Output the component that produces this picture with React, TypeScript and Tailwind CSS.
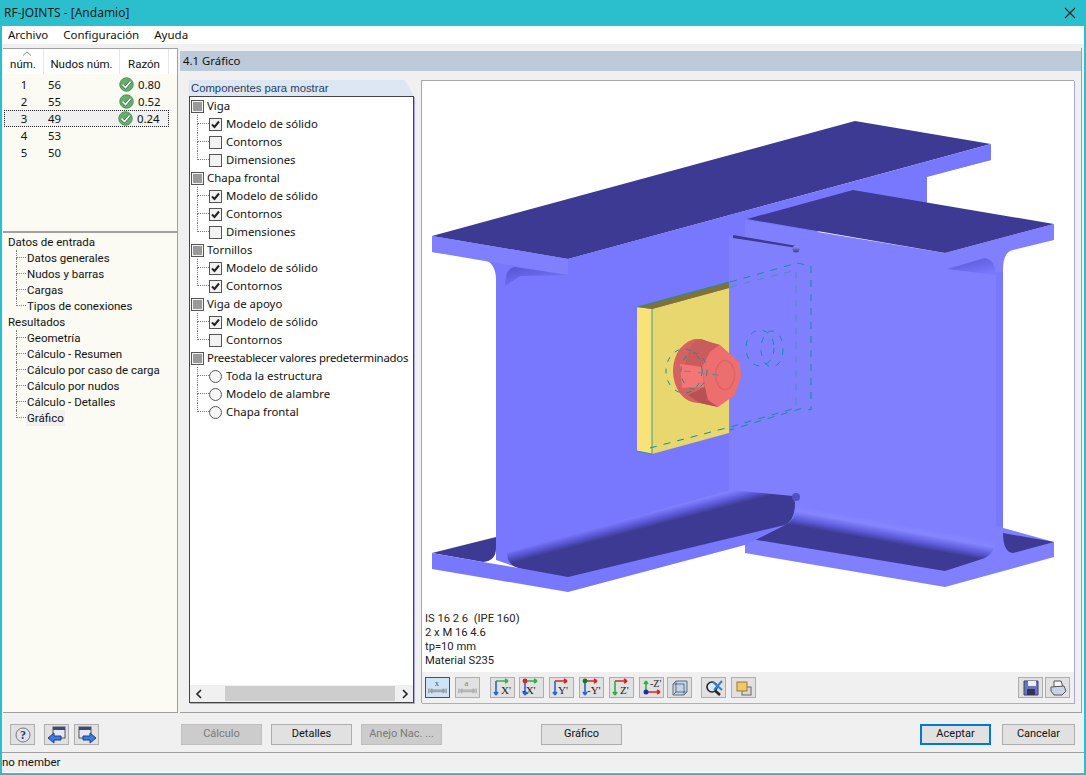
import React from "react";

const font = { fontFamily: '"Noto Sans","Liberation Sans",sans-serif' };
const roboto = { fontFamily: "Roboto, sans-serif" };

function Check() {
  return (
    <svg width="15" height="15" viewBox="0 0 16 16" className="shrink-0">
      <circle cx="8" cy="8" r="7.2" fill="#62b06e" stroke="#4d8f5a" />
      <path d="M3.8 8.2 L7 11.2 L12.4 4.8" fill="none" stroke="#3c5f45" strokeWidth="3" />
      <path d="M3.8 8.2 L7 11.2 L12.4 4.8" fill="none" stroke="#fff" strokeWidth="1.8" />
    </svg>
  );
}

function Branch({ last, h = 18, w = 12 }: { last?: boolean; h?: number; w?: number }) {
  return (
    <div className="flex flex-col shrink-0" style={{ width: w, height: h }}>
      <div className="border-l border-b border-dotted border-[#777]" style={{ height: h / 2 }} />
      {!last && <div className="border-l border-dotted border-[#777]" style={{ height: h / 2 }} />}
    </div>
  );
}

function Box({ on }: { on?: boolean }) {
  return (
    <div className="w-[13px] h-[13px] shrink-0 border border-[#555] bg-[#f2f2f2] flex items-center justify-center">
      {on && (
        <svg width="11" height="11" viewBox="0 0 11 11">
          <path d="M2 5.5 L4.5 8 L9 2.5" fill="none" stroke="#222" strokeWidth="2" />
        </svg>
      )}
    </div>
  );
}

function Group({ label, tight }: { label: string; tight?: boolean }) {
  return (
    <div className="h-[18px] flex items-center pl-[1px] whitespace-nowrap">
      <div className="w-[13px] h-[13px] shrink-0 border border-[#555] bg-[#f2f2f2] flex items-center justify-center">
        <div className="w-[9px] h-[9px] bg-[#9a9a9a]" />
      </div>
      <span className={tight ? "ml-[3px] tracking-[-0.25px]" : "ml-[3px]"}>{label}</span>
    </div>
  );
}

function Item({ label, on, last, radio }: { label: string; on?: boolean; last?: boolean; radio?: boolean }) {
  return (
    <div className="h-[18px] flex items-center pl-[7px] whitespace-nowrap">
      <Branch last={last} />
      {radio ? (
        <div className="w-[13px] h-[13px] shrink-0 rounded-full border border-[#555] bg-[#f6f6f6]" />
      ) : (
        <Box on={on} />
      )}
      <span className="ml-[4px]">{label}</span>
    </div>
  );
}

function NavItem({ label, last, sel }: { label: string; last?: boolean; sel?: boolean }) {
  return (
    <div className="h-[16px] flex items-center pl-[13px] whitespace-nowrap">
      <Branch last={last} h={16} w={10} />
      <span className={sel ? "bg-[#f0f0f0] px-[1px] leading-[16px]" : "px-[1px] leading-[16px]"}>{label}</span>
    </div>
  );
}

function Btn({ label, disabled, className }: { label: string; disabled?: boolean; className: string }) {
  return (
    <div
      style={roboto}
      className={
        "h-[21px] shrink-0 flex items-center justify-center border text-[11px] " +
        (disabled ? "bg-[#cccccc] border-[#bfbfbf] text-[#7a7a7a] " : "bg-[#e1e1e1] border-[#adadad] text-[#111] ") +
        className
      }
    >
      {label}
    </div>
  );
}

function TBtn({ children, className = "", active }: { children?: React.ReactNode; className?: string; active?: boolean }) {
  return (
    <div
      className={
        "w-[25px] h-[21px] shrink-0 border flex items-center justify-center " +
        (active ? "bg-[#cce4f7] border-[#1a5a96] " : "bg-[#e1e1e1] border-[#adadad] ") +
        className
      }
    >
      {children}
    </div>
  );
}

function Axis({ label, v, h, dot, lx = 10 }: { label: string; v: string; h: string; dot?: string; lx?: number }) {
  return (
    <svg width="23" height="19" viewBox="0 0 23 19">
      <path d="M5 3 H17 M17 3 l-3 -2 M17 3 l-3 2" stroke={h} strokeWidth="1.6" fill="none" />
      <path d="M5 3 V17 M5 17 l-2 -3 M5 17 l2 -3" stroke={v} strokeWidth="1.6" fill="none" />
      {dot && <circle cx="5" cy="3" r="2.4" fill={dot} />}
      <text x={lx} y="16" fontSize="11" fontFamily="Liberation Serif, serif" fill="#222">
        {label}
      </text>
    </svg>
  );
}

function Beam({ opacity = 1, label }: { opacity?: number; label: string }) {
  return (
    <svg width="24" height="19" viewBox="0 0 24 19" opacity={opacity}>
      <text x="9" y="8" fontSize="9" fontFamily="Liberation Serif, serif" fill="#555">{label}</text>
      <path d="M4 13 H20" stroke="#a3a3a3" strokeWidth="3" />
      <path d="M3 10.5 v5 M6 10.5 v5 M18 10.5 v5 M21 10.5 v5" stroke="#9a9a9a" strokeWidth="1.5" />
    </svg>
  );
}

function Model() {
  const light = "#8080ff";
  const web = "#7878ff";
  const dark = "#3c3a92";
  const teal = "#0f8f98";
  return (
    <svg viewBox="422 81 652 529" className="w-[652px] h-[529px] block">
      <defs>
        <linearGradient id="f1" gradientUnits="userSpaceOnUse" x1="640" y1="505" x2="646" y2="528">
          <stop offset="0" stopColor={web} />
          <stop offset="0.42" stopColor="#8080ff" />
          <stop offset="0.7" stopColor="#5e5cdc" />
          <stop offset="1" stopColor={dark} />
        </linearGradient>
        <linearGradient id="f2" gradientUnits="userSpaceOnUse" x1="900" y1="522" x2="896" y2="544">
          <stop offset="0" stopColor={light} />
          <stop offset="0.35" stopColor="#8585ff" />
          <stop offset="0.7" stopColor="#5e5cdc" />
          <stop offset="1" stopColor={dark} />
        </linearGradient>
        <linearGradient id="f3" x1="0" y1="0" x2="0.7" y2="1">
          <stop offset="0" stopColor="#5654d0" />
          <stop offset="1" stopColor={web} />
        </linearGradient>
        <linearGradient id="b1" x1="0" y1="0" x2="0" y2="1">
          <stop offset="0" stopColor="#9a98ff" />
          <stop offset="1" stopColor="#3c3a92" />
        </linearGradient>
      </defs>
      {/* main beam */}
      <path d="M432 236 L432 252 L482 259 Q496 262 496 280 L496 560 L568 585 L745 540 L729 490 L729 300 L745 236 L927 203 L927 177 L991 160 L991 145 L568 259 Z" fill={web} />
      <path d="M432 236 L855 121 L991 144 L568 259 Z" fill={dark} />
      <path d="M432 236 L568 259 L568 275 L432 252 Z" fill={light} />
      <path d="M568 259 L991 144 L991 160 L927 176 L927 203 L729 255 L568 275 Z" fill={web} />
      <path d="M505 286 Q505 268 515 267 L568 275 L520 276 Z" fill="url(#f3)" />
      {/* right beam */}
      <path d="M729 236 L745 236 L745 220 L945 253 L1054 224 L1054 240 L1013 250 Q1003 252 1003 270 L1003 540 L995 558 L945 571 L745 538 L729 490 Z" fill={light} />
      <path d="M747 219 L853 190 L1054 224 L945 253 Z" fill={dark} />
      <path d="M947 269 L985 258 Q995 260 996 275 Z" fill="url(#f3)" />
      <path d="M996 272 H1003 V540 H996 Z" fill={web} />
      <path d="M733 235 L797 246 L797 248 L733 238 Z" fill={dark} />
      <circle cx="796" cy="249" r="3.5" fill="url(#b1)" />
      {/* right bottom flange */}
      <path d="M745 538 L745 553 L945 587 L1054 557 L1054 542 L945 512 Z" fill={light} />
      <path d="M1003 533 L1054 542 L1013 553 Q1003 552 1003 533 Z" fill={dark} />
      <path d="M797 507 L995 542 Q995 552 985 558 L945 571 L745 538 L785 525 Q795 520 797 507 Z" fill="url(#f2)" />
      {/* main bottom flange */}
      <path d="M432 553 L496 537 L496 548 Q496 561 483 562 Z" fill={dark} />
      <path d="M432 553 L483 562 L519 568 L568 577 L785 525 L745 545 L568 592 L432 569 Z" fill={web} />
      <path d="M785 525 L745 545 L745 538 Z" fill={web} />
      <path d="M507 553 L730 490 L793 496 L795 503 Q795 520 785 525 L568 577 L519 568 Q507 565 507 553 Z" fill="url(#f1)" />
      <circle cx="796" cy="497" r="4" fill="#5250c0" />
      {/* plate */}
      <path d="M637 307 L652 309 L652 454 L637 451 Z" fill="#f8e27a" />
      <path d="M652 309 L729 288 L729 433 L652 454 Z" fill="#e8d66e" />
      <path d="M637 307 L729 282 L729 288 L652 309 Z" fill="#7f7235" />
      <path d="M637 307 L729 282 M652 309 V454 M637 451 L652 454" stroke={teal} strokeWidth="0.8" fill="none" />
      {/* bolt */}
      <ellipse cx="698" cy="371" rx="25" ry="32" fill="#d76060" />
      <path d="M695 339 L720 345 L710 352 L702 367 L705 387 L708 400 L718 407 L700 403 L688 400 L680 392 L676 372 L682 350 Z" fill="#d76060" />
      <path d="M692 344 L700 339 L720 345 L710 352 L702 367 L685 364 Z" fill="#c95c5c" />
      <path d="M680 364 L702 367 L704 387 L682 388 Z" fill="#f57575" />
      <path d="M688 395 L705 387 L718 407 L700 403 Z" fill="#b85252" />
      <path d="M720 345 L740 363 L741 377 L735 395 L718 407 L708 400 L705 387 L702 367 L710 352 Z" fill="#ed6e6e" />
      <ellipse cx="725" cy="375" rx="9.5" ry="14.5" fill="none" stroke="#dd6565" strokeWidth="1.5" />
      {/* hidden lines */}
      <g fill="none" stroke={teal} strokeWidth="1" strokeDasharray="7 7">
        <path d="M730 282 L797 263 L811 266 V410 L803 408 L730 430" />
        <path d="M730 287 L796 270 V407" stroke="#4f8db5" />
        <path d="M650 448 L730 427 L796 408" />
        <ellipse cx="760" cy="348" rx="14" ry="18" strokeDasharray="6 7" />
        <ellipse cx="772" cy="349" rx="11" ry="18" strokeDasharray="6 7" />
        <ellipse cx="684" cy="371" rx="18" ry="22" strokeDasharray="5 7" />
        <ellipse cx="694" cy="371" rx="13" ry="18" strokeDasharray="5 7" />
        <path d="M684 371 L726 376" stroke="#5b8f9a" />
      </g>
    </svg>
  );
}

export default function App() {
  return (
    <div style={font} className="w-[1086px] h-[775px] flex flex-col bg-[#f0f0f0] border-x-2 border-b-2 border-[#2bbfcd] text-[11.4px] text-[#111] overflow-hidden">
      {/* title */}
      <div className="h-[26px] -mx-[2px] shrink-0 bg-[#2bbfcd] flex items-center justify-between pl-[4px] pr-[10px] text-[12px]">
        <span className="text-[#1b1b1b]">RF-JOINTS - [Andamio]</span>
        <svg width="12" height="12" viewBox="0 0 12 12">
          <path d="M1 1 L11 11 M11 1 L1 11" stroke="#222" strokeWidth="1.1" />
        </svg>
      </div>
      {/* menu */}
      <div className="h-[18px] shrink-0 bg-white flex items-center pl-[6px] gap-[15px] text-[11.5px]">
        <span>Archivo</span>
        <span>Configuración</span>
        <span>Ayuda</span>
      </div>
      {/* body */}
      <div className="flex h-[669px] shrink-0 pt-[4px] pl-[1px]">
        <div className="w-[175px] shrink-0 flex flex-col bg-[#fbfbf3] border-r border-b border-[#a0a0a0] border-t border-t-[#a0a0a0]">
          {/* table */}
          <div className="h-[184px] shrink-0 flex flex-col border-b-2 border-[#a0a0a0]">
            <div style={roboto} className="h-[25px] shrink-0 bg-white flex text-center relative text-[11.5px]">
              <svg width="10" height="5" viewBox="0 0 10 5" className="absolute left-[19px] top-[2px]">
                <path d="M1 4.5 L5 1 L9 4.5" fill="none" stroke="#888" />
              </svg>
              <div className="w-[41px] border-r border-[#e5e5e5] pt-[7px]">núm.</div>
              <div className="w-[76px] border-r border-[#e5e5e5] pt-[7px]">Nudos núm.</div>
              <div className="w-[49px] border-r border-[#e5e5e5] pt-[7px]">Razón</div>
            </div>
            <div className="pt-[2px]">
              {[
                ["1", "56", "0.80"],
                ["2", "55", "0.52"],
                ["3", "49", "0.24"],
                ["4", "53", ""],
                ["5", "50", ""],
              ].map((r, i) => (
                <div
                  key={i}
                  className={
                    "h-[17px] w-[165px] ml-[1px] flex items-center " +
                    (i === 2 ? "bg-[#f0f0f0] outline-1 outline-dotted outline-[#222] -outline-offset-1" : "")
                  }
                >
                  <div className="w-[40px] text-center">{r[0]}</div>
                  <div className="w-[74px] pl-[4px]">{r[1]}</div>
                  {r[2] && (
                    <div className={"flex items-center gap-[3px] " + (i === 2 ? "" : "ml-[1px]")}>
                      <Check />
                      <span className="ml-[1px]">{r[2]}</span>
                    </div>
                  )}
                </div>
              ))}
            </div>
          </div>
          {/* nav tree */}
          <div style={roboto} className="pt-[1px] text-[11.5px]">
            <div className="h-[16px] flex items-center pl-[5px] pt-[1px]">Datos de entrada</div>
            <NavItem label="Datos generales" />
            <NavItem label="Nudos y barras" />
            <NavItem label="Cargas" />
            <NavItem label="Tipos de conexiones" last />
            <div className="h-[16px] flex items-center pl-[5px] pt-[1px]">Resultados</div>
            <NavItem label="Geometría" />
            <NavItem label="Cálculo - Resumen" />
            <NavItem label="Cálculo por caso de carga" />
            <NavItem label="Cálculo por nudos" />
            <NavItem label="Cálculo - Detalles" />
            <NavItem label="Gráfico" last sel />
          </div>
        </div>
        {/* right */}
        <div className="w-[902px] shrink-0 ml-[2px] flex flex-col border-r border-b border-[#a0a0a0]">
          <div className="h-[20px] mt-[3px] shrink-0 bg-[#bccad9] flex items-center pl-[3px]">4.1 Gráfico</div>
          <div className="flex flex-1 pt-[9px] pl-[9px] pb-[9px]">
            <div className="w-[225px] shrink-0 flex flex-col">
              <div style={{ fontFamily: '"Liberation Sans", sans-serif' }} className="h-[16px] shrink-0 bg-[#dde6f3] pl-[2px] flex items-center text-[11.3px] text-[#1d3f63] [clip-path:polygon(0_0,96%_0,100%_100%,0_100%)]">
                Componentes para mostrar
              </div>
              <div className="flex-1 flex flex-col border border-[#444] bg-white shadow-[1px_1px_0_#a9a9e0]">
                <div className="flex-1">
                  <Group label="Viga" />
                  <Item label="Modelo de sólido" on />
                  <Item label="Contornos" />
                  <Item label="Dimensiones" last />
                  <Group label="Chapa frontal" />
                  <Item label="Modelo de sólido" on />
                  <Item label="Contornos" on />
                  <Item label="Dimensiones" last />
                  <Group label="Tornillos" />
                  <Item label="Modelo de sólido" on />
                  <Item label="Contornos" on last />
                  <Group label="Viga de apoyo" />
                  <Item label="Modelo de sólido" on />
                  <Item label="Contornos" last />
                  <Group label="Preestablecer valores predeterminados" tight />
                  <Item label="Toda la estructura" radio />
                  <Item label="Modelo de alambre" radio />
                  <Item label="Chapa frontal" radio last />
                </div>
                <div className="h-[17px] shrink-0 bg-[#f0f0f0] flex items-center">
                  <div className="w-[35px] pl-[5px]">
                    <svg width="8" height="10" viewBox="0 0 8 10"><path d="M6 1 L2 5 L6 9" fill="none" stroke="#222" strokeWidth="1.6" /></svg>
                  </div>
                  <div className="w-[170px] h-[15px] bg-[#cdcdcd]" />
                  <div className="w-[18px] pl-[6px]">
                    <svg width="8" height="10" viewBox="0 0 8 10"><path d="M2 1 L6 5 L2 9" fill="none" stroke="#222" strokeWidth="1.6" /></svg>
                  </div>
                </div>
              </div>
            </div>
            {/* canvas */}
            <div className="w-[653px] ml-[7px] shrink-0 flex flex-col bg-white border-l border-t border-[#a8a8a8] shadow-[1px_1px_0_#a9a9e0]">
              <Model />
              <div style={roboto} className="h-[62px] shrink-0 pl-[3px] pt-[2px] text-[11.2px] leading-[14px] text-[#222] whitespace-pre">
                <div>IS 16 2 6  (IPE 160)</div>
                <div>2 x M 16 4.6</div>
                <div>tp=10 mm</div>
                <div>Material S235</div>
              </div>
              <div className="flex-1 bg-[#f0f0f0] flex items-center pl-[3px] pr-[4px]">
                <TBtn active><Beam label="x" /></TBtn>
                <TBtn className="ml-[5px] bg-[#d4d4d4]"><Beam opacity={0.7} label="a" /></TBtn>
                <TBtn className="ml-[10px]"><Axis label="X'" h="#35b24a" v="#2c62d8" /></TBtn>
                <TBtn className="ml-[4px]"><Axis label="-X'" h="#2fae45" v="#2c62d8" dot="#d8232a" lx={2} /></TBtn>
                <TBtn className="ml-[5px]"><Axis label="Y'" h="#d8232a" v="#2c62d8" lx={8} /></TBtn>
                <TBtn className="ml-[5px]"><Axis label="-Y'" h="#d8232a" v="#2c62d8" dot="#0d7a2a" lx={7} /></TBtn>
                <TBtn className="ml-[5px]"><Axis label="Z'" h="#d8232a" v="#2fae45" /></TBtn>
                <TBtn className="ml-[5px]">
                  <svg width="23" height="19" viewBox="0 0 23 19">
                    <path d="M6 14 V3 M6 3 l-2 3 M6 3 l2 3" stroke="#2fae45" strokeWidth="1.6" fill="none" />
                    <path d="M6 14 H20 M20 14 l-3 -2 M20 14 l-3 2" stroke="#d8232a" strokeWidth="1.6" fill="none" />
                    <circle cx="6" cy="14" r="2.5" fill="#1a2fa8" />
                    <text x="10" y="9" fontSize="10" fontFamily="Liberation Serif, serif" fill="#222">-Z'</text>
                  </svg>
                </TBtn>
                <TBtn className="ml-[3px]">
                  <svg width="20" height="18" viewBox="0 0 20 18">
                    <path d="M3 5 L6 2 H17 V13 L14 16 H3 Z" fill="#c7d4e6" stroke="#5c6d85" />
                    <path d="M6 2 V5 H14 V13 H17 M3 5 H6 M14 13 V16 M6 5 V13 H14 M6 13 L3 16" fill="none" stroke="#5c6d85" />
                  </svg>
                </TBtn>
                <TBtn className="ml-[9px]">
                  <svg width="20" height="18" viewBox="0 0 20 18">
                    <circle cx="8" cy="8" r="5" fill="#dfe7f0" stroke="#222" strokeWidth="1.6" />
                    <path d="M11.5 12 L16 16" stroke="#222" strokeWidth="2.4" />
                    <path d="M9 3 L18 11 M18 2 L10 11" stroke="#2f7fd8" strokeWidth="2" />
                  </svg>
                </TBtn>
                <TBtn className="ml-[5px]">
                  <svg width="20" height="18" viewBox="0 0 20 18">
                    <rect x="8" y="8" width="9" height="8" fill="#d9d9d9" stroke="#666" />
                    <rect x="3" y="3" width="10" height="9" fill="#f2c866" stroke="#9a7a30" />
                  </svg>
                </TBtn>
                <div className="flex-1" />
                <TBtn>
                  <svg width="20" height="18" viewBox="0 0 20 18">
                    <path d="M3 2 H17 V16 H3 Z" fill="#6a74b8" stroke="#3a4270" />
                    <rect x="7" y="2" width="8" height="5" fill="#eef0f6" />
                    <rect x="6" y="10" width="8" height="6" fill="#30345a" />
                  </svg>
                </TBtn>
                <TBtn className="ml-[2px]">
                  <svg width="20" height="18" viewBox="0 0 20 18">
                    <path d="M6 2 H13 L15 8 H6 Z" fill="#f5f7fb" stroke="#555" />
                    <path d="M3 8 L16 7 L18 12 L14 16 H6 L3 12 Z" fill="#c9d3e8" stroke="#555" />
                  </svg>
                </TBtn>
              </div>
            </div>
          </div>
        </div>
      </div>
      {/* button bar */}
      <div className="h-[40px] shrink-0 flex items-center pt-[4px] border-b border-[#a0a0a0]">
        <TBtn className="ml-[8px]">
          <svg width="20" height="18" viewBox="0 0 20 18">
            <circle cx="10" cy="9" r="7" fill="#dfe3ee" stroke="#777" />
            <text x="10" y="13" fontSize="12" fontWeight="700" textAnchor="middle" fontFamily="Liberation Serif, serif" fill="#27306e">?</text>
          </svg>
        </TBtn>
        <TBtn className="ml-[9px]">
          <svg width="20" height="18" viewBox="0 0 20 18">
            <rect x="6" y="1" width="12" height="11" fill="#e8e8f2" stroke="#555" />
            <rect x="6" y="1" width="12" height="3" fill="#3a4a88" />
            <path d="M1 12 L7 7 V10 H14 V14 H7 V17 Z" fill="#3d7ce0" stroke="#1d3f8a" />
          </svg>
        </TBtn>
        <TBtn className="ml-[5px]">
          <svg width="20" height="18" viewBox="0 0 20 18">
            <rect x="2" y="1" width="12" height="11" fill="#e8e8f2" stroke="#555" />
            <rect x="2" y="1" width="12" height="3" fill="#3a4a88" />
            <path d="M19 12 L13 7 V10 H6 V14 H13 V17 Z" fill="#3d7ce0" stroke="#1d3f8a" />
          </svg>
        </TBtn>
        <Btn label="Cálculo" disabled className="w-[81px] ml-[82px]" />
        <Btn label="Detalles" className="w-[81px] ml-[9px]" />
        <Btn label="Anejo Nac. ..." disabled className="w-[81px] ml-[9px]" />
        <Btn label="Gráfico" className="w-[81px] ml-[99px]" />
        <Btn label="Aceptar" className="w-[71px] ml-[298px] !border-[#0078d7] border-2" />
        <Btn label="Cancelar" className="w-[73px] ml-[11px]" />
      </div>
      {/* status */}
      <div style={roboto} className="h-[20px] shrink-0 flex items-start pt-[1px] text-[11.5px] border-b border-white">no member</div>
    </div>
  );
}
